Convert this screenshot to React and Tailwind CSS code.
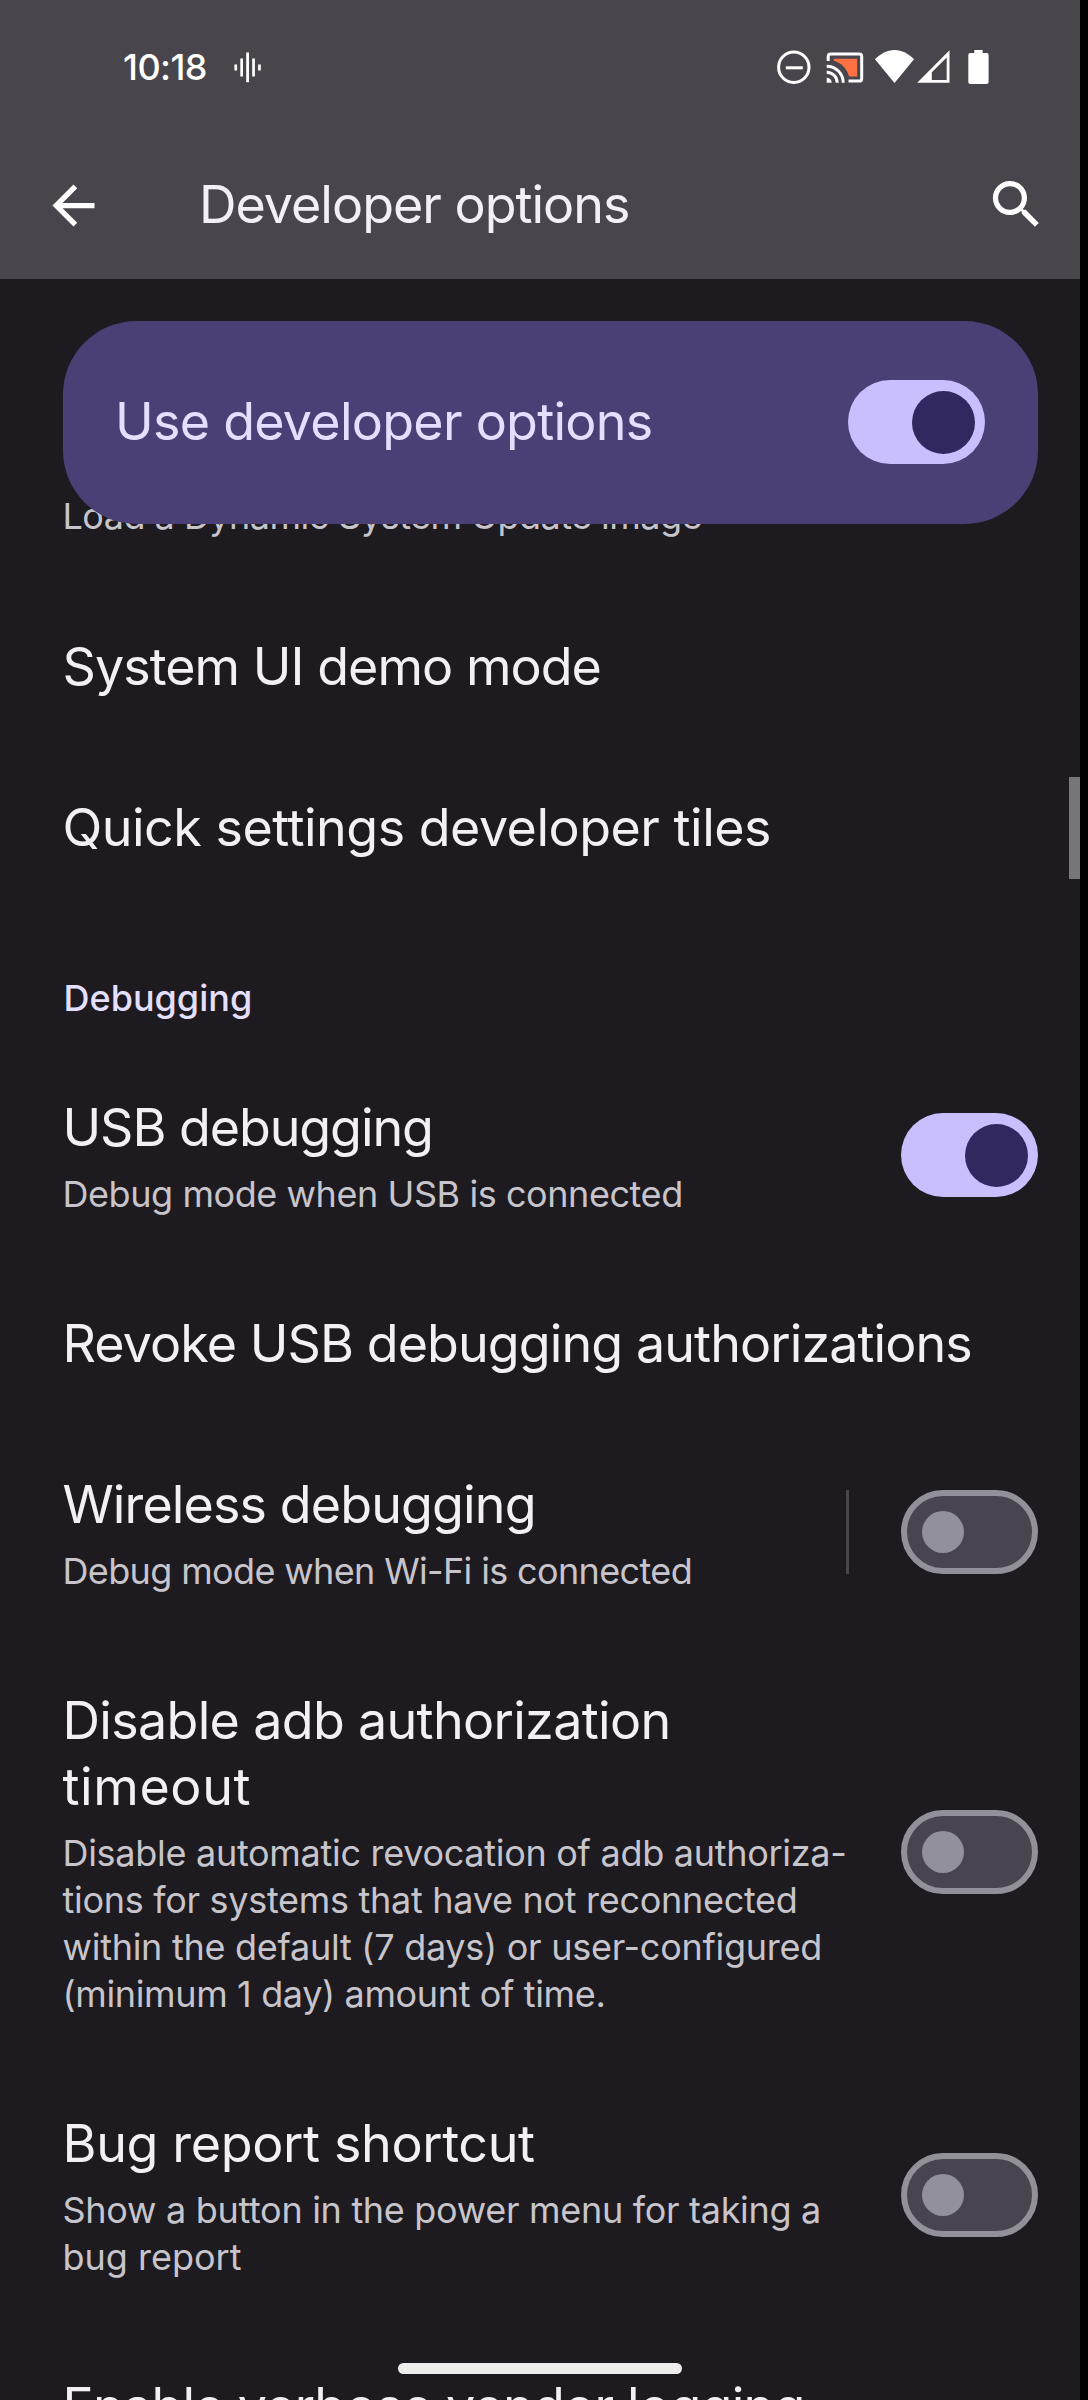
const titleText = "block whitespace-nowrap text-[52px] leading-[66.5px]";
const summaryText = "block whitespace-nowrap text-[36px] leading-[47px]";

const rowsBeforeDebugging = [
  { title: [["System UI demo mode", "tracking-[-0.96px]"]] },
  { title: [["Quick settings developer tiles", "tracking-[-0.5px]"]] },
];

const debuggingRows = [
  {
    title: [["USB debugging", "tracking-[-1.08px]"]],
    summary: [["Debug mode when USB is connected", "tracking-[-0.43px]"]],
    control: "on",
  },
  { title: [["Revoke USB debugging authorizations", "tracking-[-0.92px]"]] },
  {
    title: [["Wireless debugging", "tracking-[-0.88px]"]],
    summary: [["Debug mode when Wi-Fi is connected", "tracking-[-0.64px]"]],
    control: "off",
    divider: true,
  },
  {
    title: [
      ["Disable adb authorization", "tracking-[-0.68px]"],
      ["timeout", "tracking-[0.6px]"],
    ],
    summary: [
      ["Disable automatic revocation of adb authoriza-", "tracking-[-0.29px]"],
      ["tions for systems that have not reconnected", "tracking-[-0.29px]"],
      ["within the default (7 days) or user-configured", "tracking-[-0.27px]"],
      ["(minimum 1 day) amount of time.", "tracking-[-0.36px]"],
    ],
    control: "off",
  },
  {
    title: [["Bug report shortcut", "tracking-[-0.36px]"]],
    summary: [
      ["Show a button in the power menu for taking a", "tracking-[-0.3px]"],
      ["bug report", "tracking-[0px]"],
    ],
    control: "off",
  },
  { title: [["Enable verbose vendor logging", "tracking-[-0.76px]"]] },
];

function Switch({ on }) {
  if (on) {
    return (
      <button role="switch" aria-checked="true" className="mb-px flex h-[84px] w-[137px] shrink-0 items-center justify-end rounded-full bg-[#c9bfff] pr-[10.5px]">
        <span className="size-[63px] rounded-full bg-[#31285f]" />
      </button>
    );
  }
  return (
    <button role="switch" aria-checked="false" className="mb-[2px] flex h-[84px] w-[137px] shrink-0 items-center rounded-full border-6 border-[#929099] bg-[#48454e] pl-[15px]">
      <span className="size-[42px] rounded-full bg-[#929099]" />
    </button>
  );
}

function Row({ title, summary, control, divider }) {
  return (
    <div className="flex shrink-0 items-center pr-[42px] pl-[62.5px]">
      <div className="min-w-0 flex-1 pt-[46.75px] pb-[47.75px]">
        <div className="text-[#f3eff7]">
          {title.map(([text, tracking]) => (
            <span key={text} className={`${titleText} ${tracking}`}>{text}</span>
          ))}
        </div>
        {summary && (
          <div className="mt-[9.5px] -mb-[1.5px] text-[#c7c5cb]">
            {summary.map(([text, tracking]) => (
              <span key={text} className={`${summaryText} ${tracking}`}>{text}</span>
            ))}
          </div>
        )}
      </div>
      {divider && <div className="mr-[52px] mb-[2px] h-[84px] w-[3px] bg-[#48464d]" />}
      {control && <Switch on={control === "on"} />}
    </div>
  );
}

function StatusBar() {
  return (
    <div className="flex h-[134px] items-center pr-[91px] pl-[123px] text-white">
      <span className="w-[111px] text-[36px] leading-[44px] font-medium tracking-[-0.56px]">10:18</span>
      <svg className="h-[34px] w-[27px]" viewBox="233.5 50.5 27 34" fill="currentColor">
        <rect x="233.9" y="65" width="2.7" height="6" />
        <rect x="239.8" y="59" width="2.7" height="18" />
        <rect x="245.7" y="53" width="2.8" height="29.7" />
        <rect x="251.7" y="59" width="2.7" height="18" />
        <rect x="257.6" y="65" width="2.7" height="6" />
      </svg>
      <div className="ml-auto flex items-center">
        <svg className="h-[34px] w-[34px]" viewBox="776.5 50 34 34" fill="none" stroke="currentColor" strokeWidth="3">
          <circle cx="793.3" cy="67.2" r="15.2" />
          <path d="M785.3 67.8H802.3" />
        </svg>
        <svg className="ml-[15px] h-[34px] w-[38px]" viewBox="825.5 50 38 34" fill="none" stroke="currentColor" strokeWidth="3">
          <path d="M833.3 58.8H856.7V76.5H848.5C846.5 68.5 841 63 833.3 60.8Z" fill="#ff7043" stroke="none" />
          <path d="M827.7 61V56.3Q827.7 53.9 830.1 53.9H858.8Q861.2 53.9 861.2 56.3V78.7Q861.2 81.1 858.8 81.1H848" />
          <path d="M826.2 66.2A16.5 16.5 0 0 1 842.7 82.7M826.2 72.2A10.5 10.5 0 0 1 836.7 82.7" />
          <path d="M826.2 77.7A5 5 0 0 1 831.2 82.7H826.2Z" fill="currentColor" stroke="none" />
        </svg>
        <svg className="ml-[10.5px] h-[34px] w-[39px]" viewBox="874 50 39 34" fill="currentColor">
          <path d="M893.5 83L874 59.3C879.5 53.7 886 50 893.5 50S907.5 53.7 913 59.3Z" />
        </svg>
        <svg className="ml-[3.5px] h-[34px] w-[33px]" viewBox="916.5 50 33 34" fill="currentColor" fillRule="evenodd">
          <path d="M916.7 82.7L949 50.3V82.7ZM931.3 80H946.2V57.5L931.3 72.3Z" />
        </svg>
        <svg className="ml-[18px] h-[34px] w-[21px]" viewBox="967.7 50 21 34" fill="currentColor">
          <path d="M974 50H982.3V53H986.3Q988.3 53 988.3 55V82Q988.3 84 986.3 84H970Q968 84 968 82V55Q968 53 970 53H974Z" />
        </svg>
      </div>
    </div>
  );
}

function AppBar() {
  return (
    <div className="flex h-[145px] items-center pr-[32px] pl-[42px]">
      <svg className="mb-[2px] size-[63px] text-white" viewBox="0 0 24 24" fill="currentColor">
        <path d="M20 11H7.83l5.59-5.59L12 4l-8 8 8 8 1.41-1.41L7.83 13H20v-2z" />
      </svg>
      <h1 className="ml-[94px] pb-[4px] text-[52px] leading-[66px] tracking-[-1px] whitespace-nowrap text-[#f3eff7]">Developer options</h1>
      <svg className="mb-[4px] ml-auto size-[63px] text-white" viewBox="0 0 24 24" fill="currentColor">
        <path d="M15.5 14h-.79l-.28-.27C15.41 12.59 16 11.11 16 9.5 16 5.91 13.09 3 9.5 3S3 5.91 3 9.5 5.91 16 9.5 16c1.61 0 3.09-.59 4.23-1.57l.27.28v.79l5 4.99L20.49 19l-4.99-5zm-6 0C7.01 14 5 11.99 5 9.5S7.01 5 9.5 5 14 7.01 14 9.5 11.99 14 9.5 14z" />
      </svg>
    </div>
  );
}

export default function App() {
  return (
    <div className="h-[2400px] w-[1088px] overflow-hidden bg-[#020203] font-['Inter',sans-serif]">
      <div className="relative flex h-full w-[1080px] flex-col overflow-hidden bg-[#1d1b20]">
        <header className="h-[279px] shrink-0 bg-[#49454d]">
          <StatusBar />
          <AppBar />
        </header>
        <section className="relative z-10 mt-[42px] mr-[42px] ml-[63px] flex h-[203px] shrink-0 items-center justify-between rounded-[73.5px] bg-[#4a4075] pr-[53px] pl-[52px]">
          <span className="pb-[2px] text-[52px] leading-[66px] tracking-[-0.73px] whitespace-nowrap text-[#e5deff]">Use developer options</span>
          <Switch on />
        </section>
        <main className="-mt-[31px] flex min-h-0 flex-1 flex-col overflow-hidden">
          <div className="shrink-0 pb-[47px] pl-[62.5px] text-[#c7c5cb]">
            <span className={`${summaryText} tracking-[-0.52px]`}>Load a Dynamic System Update image</span>
          </div>
          {rowsBeforeDebugging.map((row) => (
            <Row key={row.title[0][0]} {...row} />
          ))}
          <h2 className="shrink-0 pt-[66.4px] pb-[25.6px] pl-[63.5px] text-[36px] leading-[47px] font-medium text-[#e4dfff]">Debugging</h2>
          {debuggingRows.map((row) => (
            <Row key={row.title[0][0]} {...row} />
          ))}
        </main>
        <div className="absolute top-[777px] right-0 h-[102px] w-[11px] bg-[#77757a]" />
        <div className="absolute top-[2363px] left-[398px] h-[11px] w-[284px] rounded-full bg-[#ededee]" />
      </div>
    </div>
  );
}
